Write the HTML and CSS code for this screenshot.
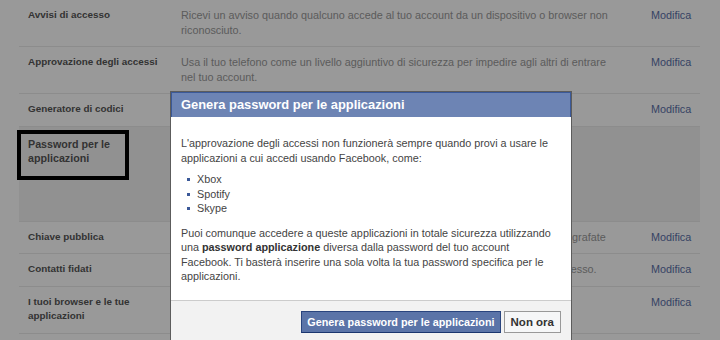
FILE: index.html
```html
<!DOCTYPE html>
<html lang="it">
<head>
<meta charset="utf-8">
<title>Protezione</title>
<link rel="stylesheet" href="styles.css">
</head>
<body>
<div class="settings">
  <div class="row">
    <div class="label">Avvisi di accesso</div>
    <div class="desc">Ricevi un avviso quando qualcuno accede al tuo account da un dispositivo o browser non riconosciuto.</div>
    <a class="edit" href="#">Modifica</a>
  </div>
  <div class="row">
    <div class="label">Approvazione degli accessi</div>
    <div class="desc">Usa il tuo telefono come un livello aggiuntivo di sicurezza per impedire agli altri di entrare nel tuo account.</div>
    <a class="edit" href="#">Modifica</a>
  </div>
  <div class="row">
    <div class="label">Generatore di codici</div>
    <div class="desc">Usa l'app Facebook per ottenere codici di sicurezza.</div>
    <a class="edit" href="#">Modifica</a>
  </div>
  <div class="row row-open">
    <div class="label label-open">Password per le applicazioni</div>
    <div class="mark"></div>
  </div>
  <div class="row">
    <div class="label">Chiave pubblica</div>
    <div class="desc">Gestisci la tua chiave OpenPGP e scegli se vuoi ricevere notifiche via e-mail crittografate</div>
    <a class="edit" href="#">Modifica</a>
  </div>
  <div class="row">
    <div class="label">Contatti fidati</div>
    <div class="desc">Scegli gli amici che puoi chiamare per aiutarti se dovessi avere problemi con l'accesso.</div>
    <a class="edit" href="#">Modifica</a>
  </div>
  <div class="row">
    <div class="label">I tuoi browser e le tue applicazioni</div>
    <div class="desc">Controlla i browser salvati.</div>
    <a class="edit" href="#">Modifica</a>
  </div>
</div>

<div class="overlay"></div>

<div class="dialog">
  <div class="dialog-head">Genera password per le applicazioni</div>
  <div class="dialog-body">
    <p>L'approvazione degli accessi non funzionerà sempre quando provi a usare le applicazioni a cui accedi usando Facebook, come:</p>
    <ul class="apps">
      <li>Xbox</li>
      <li>Spotify</li>
      <li>Skype</li>
    </ul>
    <p>Puoi comunque accedere a queste applicazioni in totale sicurezza utilizzando una <b>password applicazione</b> diversa dalla password del tuo account Facebook. Ti basterà inserire una sola volta la tua password specifica per le applicazioni.</p>
  </div>
  <div class="dialog-foot">
    <button class="btn btn-primary">Genera password per le applicazioni</button>
    <button class="btn btn-plain">Non ora</button>
  </div>
</div>
</body>
</html>
```

FILE: styles.css
```css
html, body {
  margin: 0;
  padding: 0;
  overflow: hidden;
  background: #fff;
  font-family: "Liberation Sans", Arial, sans-serif;
  font-size: 10.8px;
  line-height: 14.5px;
}

.settings {
  margin-left: 19px;
  width: 681px;
}

.row {
  position: relative;
  display: flex;
  padding: 8px 0 9px;
  border-bottom: 1px solid #e9e9e9;
}

.label {
  box-sizing: border-box;
  flex: 0 0 162px;
  padding: 0 15px 0 9px;
  font-weight: bold;
  font-size: 9.9px;
  color: #555;
}

.label-open {
  font-size: 10.7px;
}

.desc {
  flex: 0 0 438px;
  color: #999;
}

.edit {
  margin-left: 32px;
  color: #5a70a8;
  text-decoration: none;
}

.row-open {
  background: #f2f2f2;
  height: 95px;
  box-sizing: border-box;
  padding-top: 10px;
}

.mark {
  position: absolute;
  left: -2px;
  top: 3px;
  width: 112px;
  height: 50px;
  box-sizing: border-box;
  border: 4px solid #000;
}

.overlay {
  position: fixed;
  inset: 0;
  background: rgba(0, 0, 0, 0.4);
}

.dialog {
  position: absolute;
  left: 170px;
  top: 91px;
  width: 402px;
  box-sizing: border-box;
  border: 1px solid #5c5c5c;
  background: #fff;
}

.dialog-head {
  box-sizing: border-box;
  height: 25px;
  line-height: 24px;
  padding-left: 9px;
  background: #6d84b4;
  border: 1px solid #3b5998;
  border-bottom: 0;
  color: #fff;
  font-weight: bold;
  font-size: 12.9px;
}

.dialog-body {
  padding: 19px 10px 16px;
  color: #444;
}

.dialog-body p {
  margin: 0;
}

.dialog-body b {
  color: #333;
}

.apps {
  list-style: none;
  margin: 7px 0 10px;
  padding: 0;
}

.apps li {
  position: relative;
  padding-left: 16px;
}

.apps li::before {
  content: "";
  position: absolute;
  left: 6px;
  top: 6px;
  width: 3px;
  height: 3px;
  background: #3b5998;
}

.dialog-foot {
  display: flex;
  justify-content: flex-end;
  gap: 3px;
  padding: 10px 10px 12px;
  background: #f2f2f2;
  border-top: 1px solid #ccc;
}

.btn {
  box-sizing: border-box;
  height: 22px;
  margin: 0;
  padding: 0 5px;
  font-family: "Liberation Sans", Arial, sans-serif;
  font-weight: bold;
  border-radius: 0;
}

.btn-primary {
  font-size: 10.8px;
  color: #fff;
  background: #5b74a8;
  border: 1px solid #29447e;
  border-bottom-color: #1a356e;
}

.btn-plain {
  font-size: 11.5px;
  color: #333;
  background: #f6f7f8;
  border: 1px solid #999;
  padding: 0 6px;
}
```
